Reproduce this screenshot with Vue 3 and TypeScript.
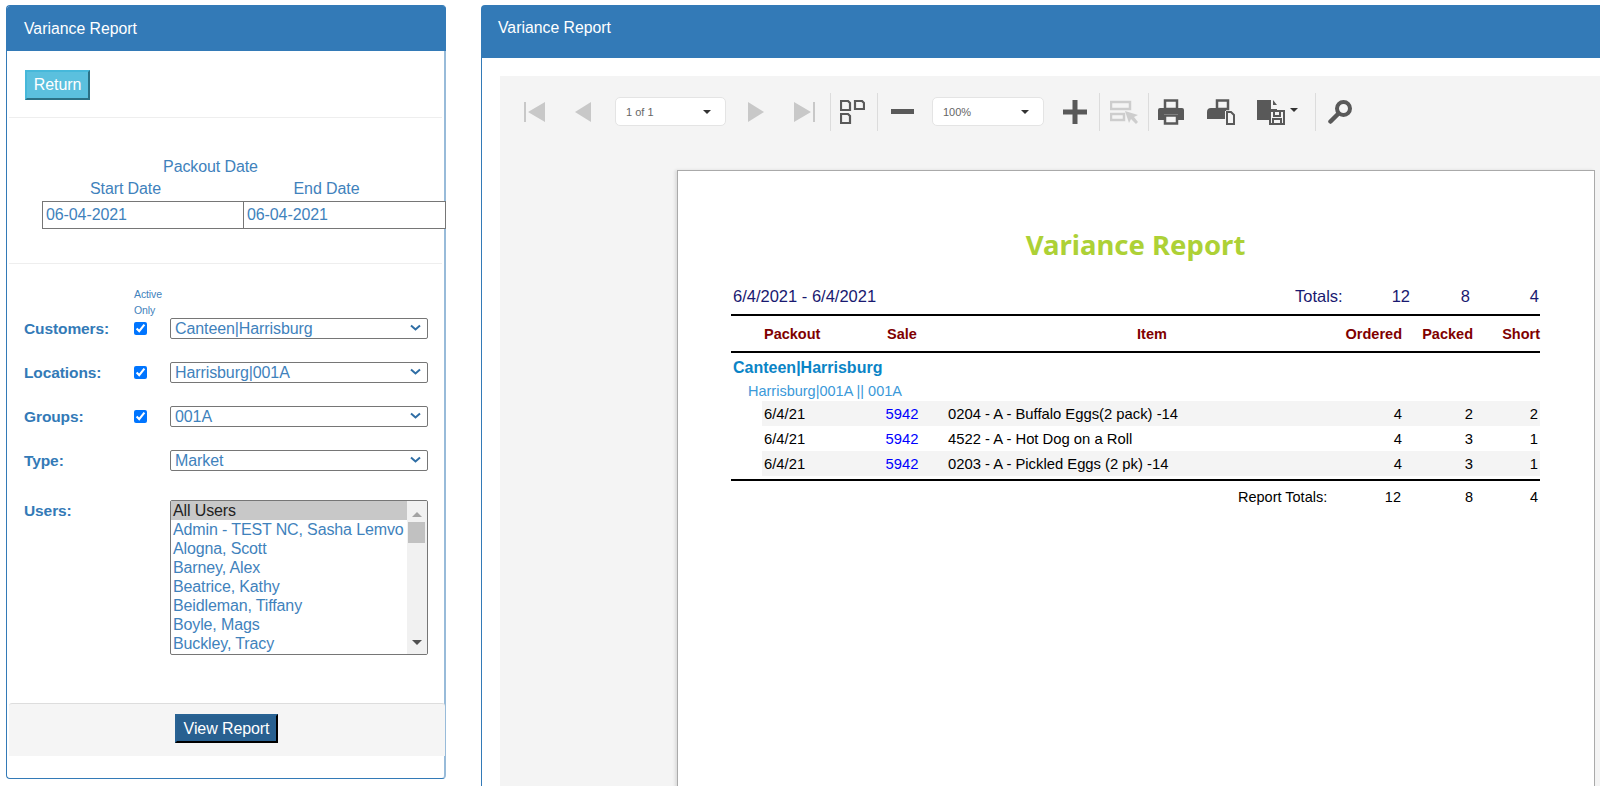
<template>
  <div class="page">
    <section class="panel side">
      <div class="panel-head side-head">Variance Report</div>
      <div class="return-row"><button class="btn-return">Return</button></div>
      <hr class="rule" />
      <div class="dates">
        <div class="dates-title">Packout Date</div>
        <div class="dates-labels">
          <span>Start Date</span>
          <span>End Date</span>
        </div>
        <div class="dates-inputs">
          <input type="text" value="06-04-2021" />
          <input type="text" value="06-04-2021" />
        </div>
      </div>
      <hr class="rule rule-low" />
      <div class="active-only">Active<br />Only</div>
      <div class="filters">
        <template v-for="f in filters" :key="f.label">
          <label class="f-label">{{ f.label }}</label>
          <div class="f-check"><input v-if="f.check" type="checkbox" checked /></div>
          <div class="sel">
            <select>
              <option>{{ f.value }}</option>
            </select>
            <svg class="chev" width="11" height="7" viewBox="0 0 11 7">
              <path d="M1 1.5l4.5 4 4.5-4" fill="none" stroke="#2f6ea5" stroke-width="2" />
            </svg>
          </div>
        </template>
        <label class="f-label users-label">Users:</label>
        <div></div>
        <div class="listbox">
          <ul>
            <li v-for="(u, i) in users" :key="u" :class="{ on: i === 0 }">{{ u }}</li>
          </ul>
          <div class="scroll">
            <svg width="20" height="153" viewBox="0 0 20 153">
              <path d="M5 16l5-5 5 5z" fill="#a3a3a3" />
              <rect x="1" y="21" width="17" height="21" fill="#c1c1c1" />
              <path d="M5 139l5 5 5-5z" fill="#505050" />
            </svg>
          </div>
        </div>
      </div>
      <div class="side-foot"><button class="btn-view">View Report</button></div>
    </section>

    <section class="panel main">
      <div class="panel-head main-head">Variance Report</div>
      <div class="viewer">
        <div class="toolbar">
          <div class="tool t48">
            <svg width="21" height="20" viewBox="0 0 21 20"><path d="M0 0h2v20H0zM21 0v20L4 10z" fill="#c8c8c8" /></svg>
          </div>
          <div class="tool t50">
            <svg width="16" height="20" viewBox="0 0 16 20"><path d="M16 0v20L0 10z" fill="#c8c8c8" /></svg>
          </div>
          <div class="drop d-page"><span>1 of 1</span><i class="caret"></i></div>
          <div class="tool t60">
            <svg width="16" height="20" viewBox="0 0 16 20"><path d="M0 0v20l16-10z" fill="#c8c8c8" /></svg>
          </div>
          <div class="tool t36">
            <svg width="21" height="20" viewBox="0 0 21 20"><path d="M19 0h2v20h-2zM0 0v20l17-10z" fill="#c8c8c8" /></svg>
          </div>
          <div class="sep s8"></div>
          <div class="tool t42">
            <svg width="25" height="24" viewBox="0 0 25 24" fill="none" stroke="#595959" stroke-width="2.200">
              <path d="M1 1h7l2 2v7H1zM15 1h7l2 2v6h-9zM1 14h7l2 2v7H1z" />
            </svg>
          </div>
          <div class="sep s4"></div>
          <div class="tool t48">
            <svg width="23" height="5" viewBox="0 0 23 5"><rect width="23" height="5" fill="#595959" /></svg>
          </div>
          <div class="drop d-zoom"><span>100%</span><i class="caret"></i></div>
          <div class="tool t46 s8">
            <svg width="24" height="24" viewBox="0 0 24 24"><path d="M9.500 0h5v9.500H24v5h-9.500V24h-5v-9.500H0v-5h9.500z" fill="#595959" /></svg>
          </div>
          <div class="sep s1"></div>
          <div class="tool t48">
            <svg width="28" height="24" viewBox="0 0 28 24">
              <path d="M1 2h19v7H1zM1 14h13v6H1z" fill="none" stroke="#cdcdcd" stroke-width="2.500" />
              <path d="M15 11l13 4-4 2 4 5-2 2-5-5-2 4z" fill="#cdcdcd" />
            </svg>
          </div>
          <div class="sep"></div>
          <div class="tool t44">
            <svg width="26" height="26" viewBox="0 0 26 26">
              <path d="M7 1.500h12V10H7z" fill="none" stroke="#595959" stroke-width="2.500" />
              <path d="M2 9h22a2 2 0 0 1 2 2v10h-6v-6H6v6H0V11a2 2 0 0 1 2-2z" fill="#595959" />
              <path d="M7 16.500h12v8H7z" fill="none" stroke="#595959" stroke-width="2.500" />
            </svg>
          </div>
          <div class="tool t56">
            <svg width="28" height="26" viewBox="0 0 28 26">
              <path d="M10 1.500h11V10H10z" fill="none" stroke="#595959" stroke-width="2.500" />
              <path d="M4 9h15v3h-1v8H0v-7a4 4 0 0 1 4-4z" fill="#595959" />
              <path d="M20 13h4l3 3v9h-7z" fill="none" stroke="#595959" stroke-width="2" />
            </svg>
          </div>
          <div class="tool t58">
            <svg width="42" height="26" viewBox="0 0 42 26">
              <path d="M0 1h14v9h6v1h-8v10H0z" fill="#595959" />
              <path d="M16 1l4 5h-4z" fill="#595959" />
              <path d="M13 12h14v13H13zM17 12v5h6v-5M16 25v-5h8v5" fill="none" stroke="#595959" stroke-width="2" />
              <path d="M33 9h8l-4 4z" fill="#333" />
            </svg>
          </div>
          <div class="sep s8"></div>
          <div class="tool t48">
            <svg width="24" height="24" viewBox="0 0 24 24" fill="none" stroke="#595959">
              <circle cx="15.500" cy="8.500" r="6.500" stroke-width="4" />
              <path d="M10 14l-7.500 7.500" stroke-width="4.500" stroke-linecap="round" />
            </svg>
          </div>
        </div>

        <div class="sheet">
          <h1 class="title">Variance Report</h1>
          <div class="summary">
            <span class="range">6/4/2021 - 6/4/2021</span>
            <span class="sum-label">Totals:</span>
            <span class="sum-a">12</span>
            <span class="sum-b">8</span>
            <span class="sum-c">4</span>
          </div>
          <div class="grid head-row">
            <span class="c-date">Packout</span>
            <span class="c-sale">Sale</span>
            <span class="c-item">Item</span>
            <span class="num">Ordered</span>
            <span class="num">Packed</span>
            <span class="num c-short">Short</span>
          </div>
          <div class="group">Canteen|Harrisburg</div>
          <div class="sub">Harrisburg|001A || 001A</div>
          <div v-for="(r, i) in rows" :key="r.item" class="grid row" :class="{ alt: i % 2 === 0 }">
            <span class="c-date">{{ r.date }}</span>
            <span class="c-sale link">{{ r.sale }}</span>
            <span class="c-desc">{{ r.item }}</span>
            <span class="num">{{ r.ordered }}</span>
            <span class="num">{{ r.packed }}</span>
            <span class="num c-end">{{ r.short }}</span>
          </div>
          <div class="report-totals">
            <span class="rt-label">Report Totals:</span>
            <span class="rt-a">12</span>
            <span class="rt-b">8</span>
            <span class="rt-c">4</span>
          </div>
        </div>
      </div>
    </section>
  </div>
</template>

<script setup lang="ts">
const filters = [
  { label: 'Customers:', check: true, value: 'Canteen|Harrisburg' },
  { label: 'Locations:', check: true, value: 'Harrisburg|001A' },
  { label: 'Groups:', check: true, value: '001A' },
  { label: 'Type:', check: false, value: 'Market' },
]

const users = [
  'All Users',
  'Admin - TEST NC, Sasha Lemvo',
  'Alogna, Scott',
  'Barney, Alex',
  'Beatrice, Kathy',
  'Beidleman, Tiffany',
  'Boyle, Mags',
  'Buckley, Tracy',
]

const rows = [
  { date: '6/4/21', sale: '5942', item: '0204 - A - Buffalo Eggs(2 pack) -14', ordered: 4, packed: 2, short: 2 },
  { date: '6/4/21', sale: '5942', item: '4522 - A - Hot Dog on a Roll', ordered: 4, packed: 3, short: 1 },
  { date: '6/4/21', sale: '5942', item: '0203 - A - Pickled Eggs (2 pk) -14', ordered: 4, packed: 3, short: 1 },
]
</script>

<style>
html,
body {
  margin: 0;
  overflow: hidden;
  background: #fff;
}
</style>

<style scoped>
.page {
  width: 1600px;
  height: 786px;
  overflow: hidden;
  display: flex;
  align-items: flex-start;
  padding: 5px 0 0 6px;
  box-sizing: border-box;
  font-family: "Liberation Sans", Arial, sans-serif;
  color: #3f82bc;
  font-size: 16px;
  letter-spacing: -0.1px;
}
.panel {
  border: 1px solid #337ab7;
  border-radius: 4px;
  box-sizing: border-box;
  background: #fff;
}
.side {
  width: 440px;
  height: 774px;
  flex: none;
  border-right-color: #98bbd9;
  border-right-width: 2px;
}
.main {
  width: 1140px;
  height: 800px;
  flex: none;
  margin-left: 35px;
  border-bottom: 0;
}
.panel-head {
  height: 45px;
  background: #337ab7;
  color: #fff;
  padding: 0 17px;
  line-height: 45px;
  font-size: 15.8px;
  letter-spacing: 0;
}
.side-head {
  margin-right: -2px;
  border-radius: 3px 3px 0 0;
}
.main-head {
  height: 52px;
  line-height: 44px;
  padding-left: 16px;
}
.return-row {
  padding: 19px 0 0 18px;
  height: 48px;
  box-sizing: border-box;
}
.btn-return {
  width: 65px;
  height: 30px;
  padding: 0;
  background: #5bc0de;
  color: #fff;
  border: 2px outset #46b8da;
  font: 16px "Liberation Sans", Arial, sans-serif;
  letter-spacing: -0.1px;
}
.rule {
  border: 0;
  border-top: 1px solid #eee;
  margin: 18px 2px 0;
}
.rule-low {
  margin-top: 34px;
}
.dates {
  padding-top: 38px;
  line-height: 22px;
}
.dates-title {
  width: 371px;
  margin-left: 18px;
  text-align: center;
}
.dates-labels {
  display: grid;
  grid-template-columns: 201px 201px;
  margin-left: 18px;
  text-align: center;
}
.dates-inputs {
  display: flex;
  margin: 1px 0 0 35px;
  width: 404px;
}
.dates-inputs input {
  width: 202px;
  height: 28px;
  box-sizing: border-box;
  border: 1px solid #767676;
  padding: 0 3px;
  margin: 0;
  color: #3f82bc;
  font: 16px "Liberation Sans", Arial, sans-serif;
  letter-spacing: -0.1px;
  outline: none;
  background: #fff;
}
.dates-inputs input + input {
  margin-left: -1px;
  width: 203px;
}
.active-only {
  padding: 22px 0 0 127px;
  font-size: 10.5px;
  line-height: 16px;
}
.filters {
  display: grid;
  grid-template-columns: 110px 36px 258px;
  row-gap: 23px;
  padding-left: 17px;
  align-items: center;
}
.f-label {
  font-weight: bold;
  font-size: 15.5px;
  color: #337ab7;
}
.f-check {
  display: flex;
  align-items: center;
}
.f-check input {
  width: 13px;
  height: 13px;
  margin: 0;
  accent-color: #0075ff;
}
.sel {
  position: relative;
  height: 21px;
}
.sel select {
  appearance: none;
  width: 100%;
  height: 21px;
  box-sizing: border-box;
  border: 1px solid #767676;
  border-radius: 2px;
  background: #fff;
  color: #3f82bc;
  padding: 0 0 0 4px;
  font: 16px "Liberation Sans", Arial, sans-serif;
  letter-spacing: -0.1px;
  outline: none;
}
.chev {
  position: absolute;
  right: 7px;
  top: 6px;
  pointer-events: none;
}
.users-label {
  align-self: start;
  line-height: 21px;
  margin-top: 6px;
}
.listbox {
  align-self: start;
  margin-top: 6px;
  height: 155px;
  box-sizing: border-box;
  border: 1px solid #767676;
  border-radius: 2px;
  display: flex;
  overflow: hidden;
}
.listbox ul {
  list-style: none;
  margin: 0;
  padding: 0;
  flex: 1;
  line-height: 19px;
  letter-spacing: -0.13px;
}
.listbox li {
  padding-left: 2px;
  white-space: nowrap;
}
.listbox li.on {
  background: #c8c8c8;
  color: #222;
}
.scroll {
  width: 20px;
  background: #f1f1f1;
  flex: none;
}
.side-foot {
  margin: 48px 0 0 2px;
  width: 436px;
  height: 53px;
  box-sizing: border-box;
  border-top: 1px solid #ddd;
  background: #f5f5f5;
  border-radius: 3px 3px 0 0;
  padding: 10px 0 0 166px;
}
.btn-view {
  width: 103px;
  height: 29px;
  padding: 0;
  background: #286090;
  color: #fff;
  border: 2px outset #122b40;
  font: 16px "Liberation Sans", Arial, sans-serif;
  letter-spacing: -0.1px;
}
.viewer {
  margin: 18px 0 0 18px;
  background: #f4f4f4;
  height: 730px;
}
.toolbar {
  height: 94px;
  padding: 0 0 23px 10px;
  box-sizing: border-box;
  display: flex;
  align-items: center;
  letter-spacing: 0;
}
.tool {
  flex: none;
  height: 38px;
  display: flex;
  align-items: center;
  justify-content: center;
}
.t36 { width: 36px; }
.t42 { width: 42px; }
.t44 { width: 44px; }
.t46 { width: 46px; }
.t48 { width: 48px; }
.t50 { width: 50px; }
.t56 { width: 56px; }
.t58 { width: 58px; }
.t60 { width: 60px; }
.sep {
  width: 1px;
  height: 38px;
  margin-top: 1px;
  background: #dcdcdc;
  flex: none;
}
.s1 { margin-left: 1px; }
.s4 { margin-left: 4px; }
.s8 { margin-left: 8px; }
.drop {
  flex: none;
  height: 29px;
  box-sizing: border-box;
  background: #fff;
  border: 1px solid #e4e4e4;
  border-radius: 5px;
  display: flex;
  align-items: center;
  justify-content: space-between;
  padding: 0 14px 0 10px;
  color: #666;
  font-size: 11px;
}
.d-page {
  width: 111px;
  margin-left: 7px;
}
.d-zoom {
  width: 112px;
  margin-left: 6px;
}
.caret {
  width: 0;
  height: 0;
  border-left: 4px solid transparent;
  border-right: 4px solid transparent;
  border-top: 4px solid #333;
}
.sheet {
  width: 918px;
  height: 660px;
  margin-left: 177px;
  box-sizing: border-box;
  border: 1px solid #aaa;
  background: #fff;
  box-shadow: -2px 0 3px rgba(0, 0, 0, 0.1);
  padding: 59px 54px 0 53px;
  color: #000;
  letter-spacing: 0;
}
.title {
  margin: 0;
  height: 30px;
  text-align: center;
  color: #add136;
  font: bold 27.500px/30px "Noto Sans", sans-serif;
}
.summary {
  display: flex;
  margin-top: 24px;
  height: 30px;
  line-height: 24px;
  color: #191970;
  font-size: 16.500px;
  border-bottom: 2px solid #000;
}
.range {
  margin-left: 2px;
  width: 562px;
}
.sum-label { width: 80px; }
.sum-a { width: 35px; text-align: right; }
.sum-b { width: 60px; text-align: right; }
.sum-c { width: 69px; text-align: right; }
.grid {
  display: grid;
  grid-template-columns: 112px 56px 400px 72px 71px 68px;
  margin-left: 31px;
  align-items: center;
}
.num {
  text-align: right;
}
.head-row {
  margin-left: 0;
  padding-left: 31px;
  height: 35px;
  border-bottom: 2px solid #000;
  color: #800000;
  font-weight: bold;
  font-size: 14.500px;
}
.c-date { padding-left: 2px; }
.c-sale { text-align: center; }
.c-item { text-align: center; padding-left: 44px; }
.c-short { padding-right: 1px; }
.c-end { padding-right: 3px; }
.c-desc { padding-left: 18px; white-space: nowrap; }
.link { color: #0000ff; }
.group {
  margin: 3px 0 0 2px;
  height: 24px;
  line-height: 24px;
  color: #0a84c6;
  font-weight: bold;
  font-size: 16px;
}
.sub {
  margin-left: 17px;
  height: 21px;
  line-height: 22px;
  color: #3b99d9;
  font-size: 14.500px;
}
.row {
  height: 25px;
  font-size: 14.800px;
}
.row.alt {
  background: #f4f4f4;
}
.report-totals {
  display: flex;
  margin-top: 3px;
  border-top: 2px solid #000;
  padding-top: 6px;
  line-height: 20px;
  font-size: 14.500px;
}
.rt-label { margin-left: 507px; width: 91px; }
.rt-a { width: 72px; text-align: right; }
.rt-b { width: 72px; text-align: right; }
.rt-c { width: 65px; text-align: right; }
</style>
